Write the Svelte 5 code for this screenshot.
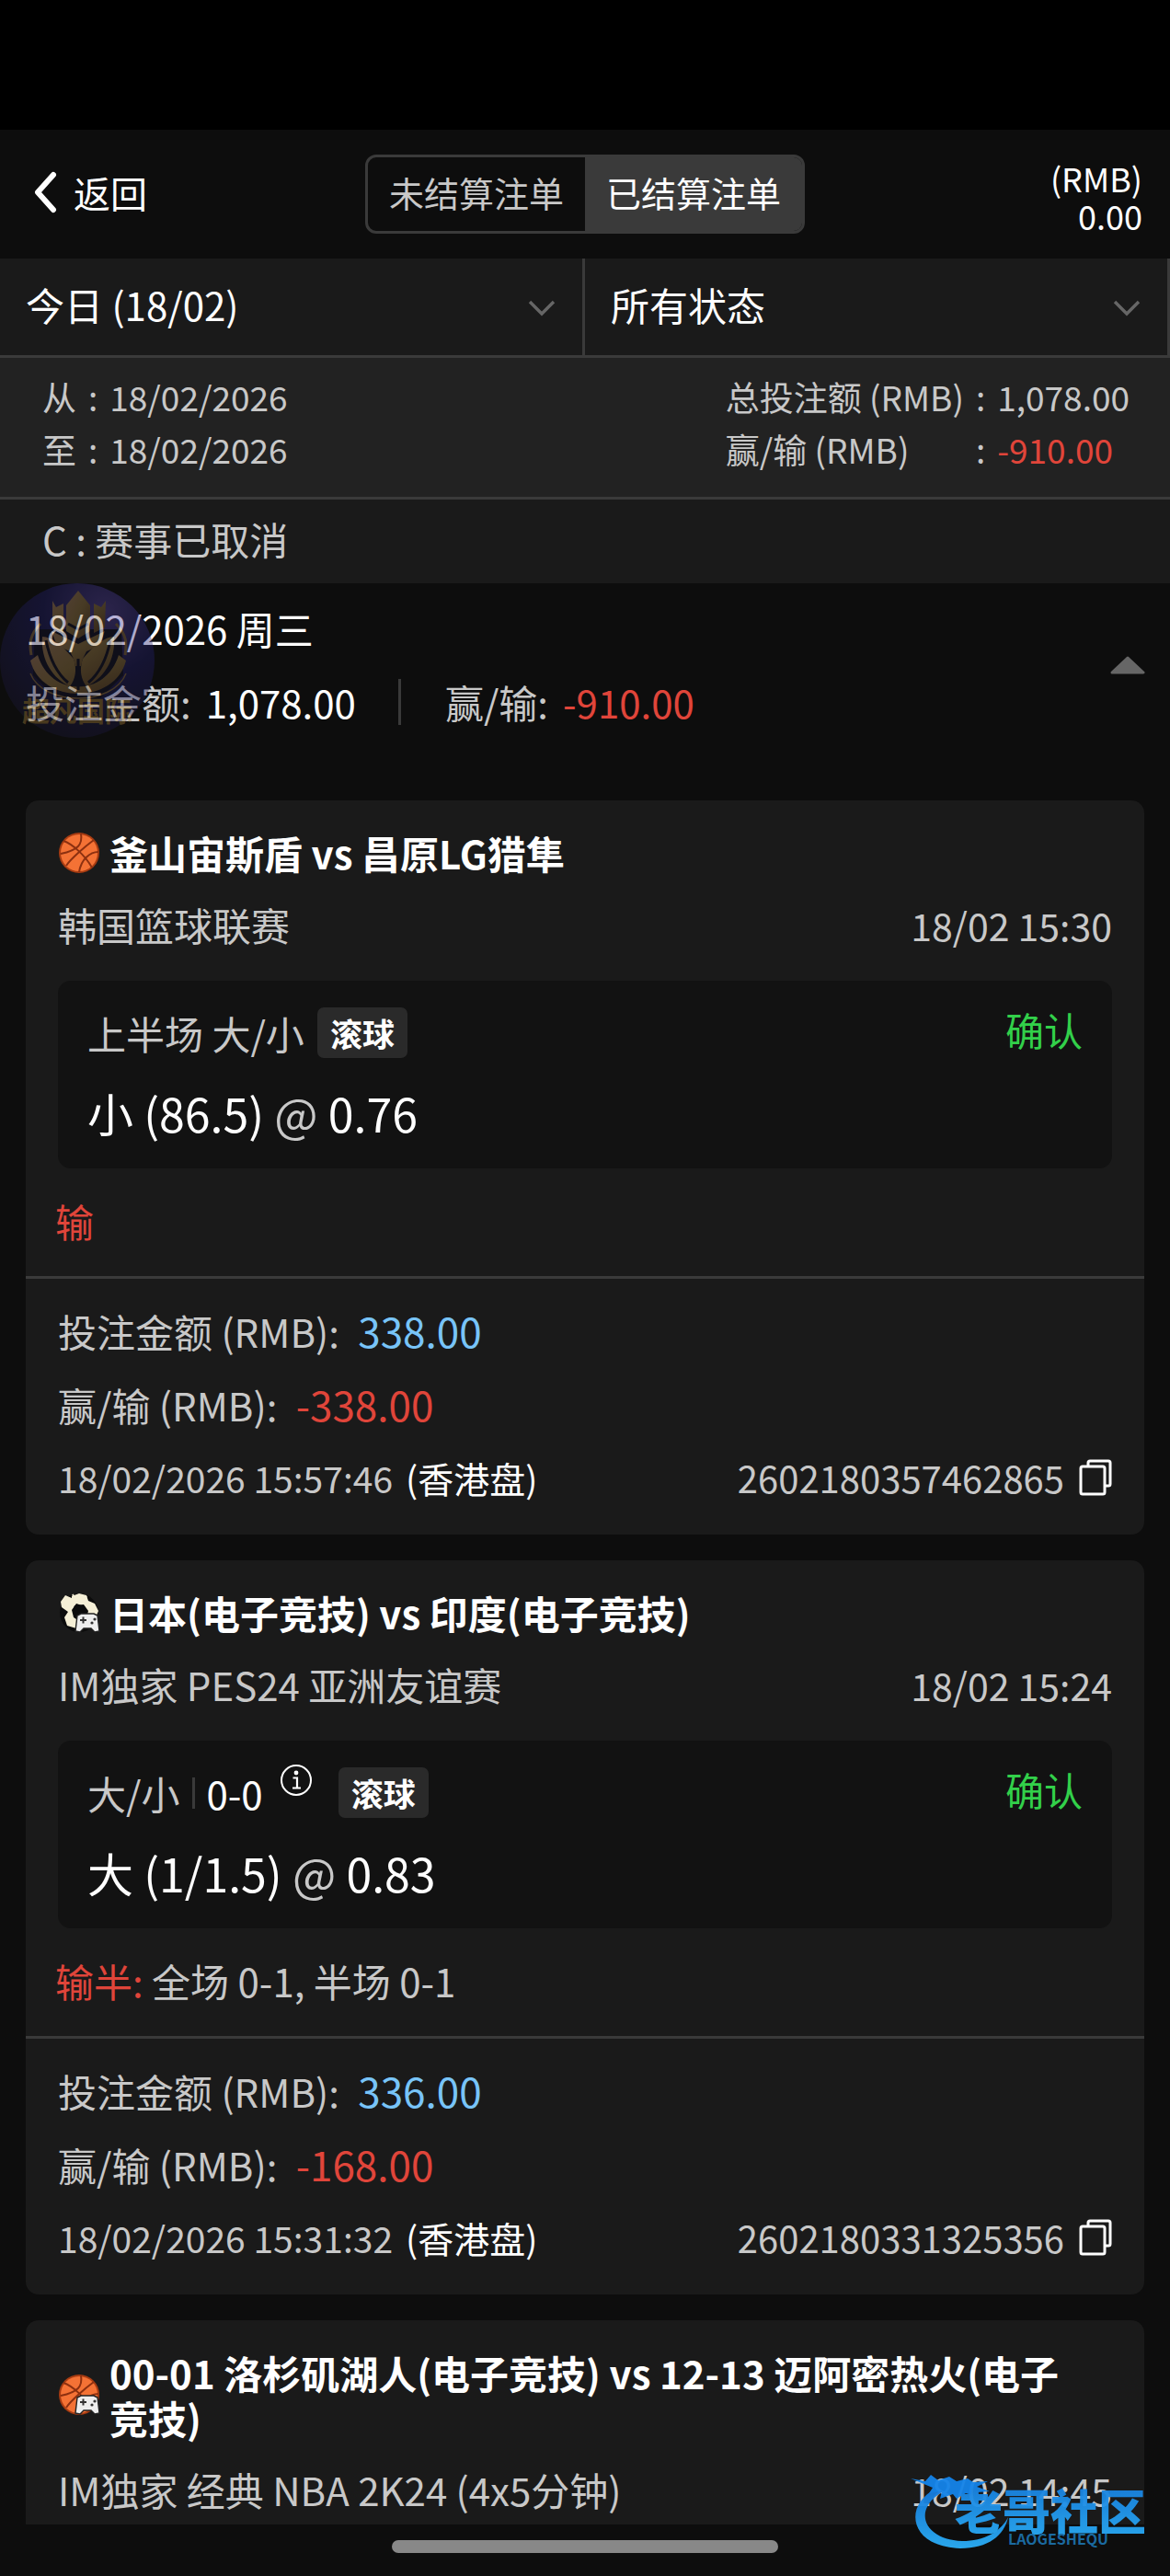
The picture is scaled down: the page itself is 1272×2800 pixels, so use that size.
<script>
  let tab = $state('settled');
  let open = $state(true);

  const tabs = [
    { id: 'unsettled', label: '未结算注单' },
    { id: 'settled', label: '已结算注单' }
  ];

  const bets = [
    {
      icon: 'basketball',
      title: '釜山宙斯盾 vs 昌原LG猎隼',
      league: '韩国篮球联赛',
      kickoff: '18/02 15:30',
      market: '上半场 大/小',
      pick: '小 (86.5)',
      odds: '0.76',
      result: '输',
      stake: '338.00',
      profit: '-338.00',
      placed: '18/02/2026 15:57:46',
      id: '2602180357462865'
    },
    {
      icon: 'esoccer',
      title: '日本(电子竞技) vs 印度(电子竞技)',
      league: 'IM独家 PES24 亚洲友谊赛',
      kickoff: '18/02 15:24',
      market: '大/小',
      score: '0-0',
      pick: '大 (1/1.5)',
      odds: '0.83',
      result: '输半:',
      detail: '全场 0-1, 半场 0-1',
      stake: '336.00',
      profit: '-168.00',
      placed: '18/02/2026 15:31:32',
      id: '2602180331325356'
    },
    {
      icon: 'ebasketball',
      title: '00-01 洛杉矶湖人(电子竞技) vs 12-13 迈阿密热火(电子竞技)',
      league: 'IM独家 经典 NBA 2K24 (4x5分钟)',
      kickoff: '18/02 14:45'
    }
  ];

  function copy(id) {
    navigator.clipboard?.writeText(id);
  }
</script>

{#snippet chevron()}
  <svg class="chevron" viewBox="0 0 30 18" aria-hidden="true">
    <path d="M2 2l13 13L28 2" fill="none" stroke="#666" stroke-width="3.4" />
  </svg>
{/snippet}

{#snippet sportIcon(name)}
  <svg class="sport" viewBox="0 0 46 46" aria-hidden="true">
    {#if name === 'esoccer'}
      <circle cx="23" cy="23" r="21" fill="#0c0c0c" />
      <path d="M15 5l8-3 8 2 2 6 7 3 4 8-3 7-10-3-2-9-9-3-5 7 2 8 3 2v10l-10-3-3-9 4-6-7-5-1-6 5-7 7 3z" fill="#f5efd6" />
      <path d="M16 3l3 6 8 1 4-5" fill="none" stroke="#f5efd6" stroke-width="2" />
      <path d="M18 15l10-1 5 7-2 8H19l-3-7z" fill="#0c0c0c" />
    {:else}
      <circle cx="23" cy="23" r="22" fill="#a83c12" />
      <circle cx="23" cy="23" r="20" fill="#f47235" />
      <g fill="none" stroke="#8c3010" stroke-width="2">
        <path d="M6 10c9 3 23 15 31 29" />
        <path d="M25 2c2 12-3 18-22 22" />
        <path d="M39 9C31 15 14 29 9 37" />
        <path d="M44 22c-9 0-19 8-21 22" />
      </g>
    {/if}
    {#if name !== 'basketball'}
      <path d="M21 26l4-2h14l4 2 2 17-5 1-4-4h-8l-4 4-5-1z" fill="#eee" stroke="#222" stroke-width="1.4" />
      <path d="M24 31h7M27.500 27.500v7" stroke="#333" stroke-width="2" />
      <circle cx="37" cy="34" r="1.6" fill="#333" />
      <circle cx="40" cy="30" r="1.6" fill="#333" />
    {/if}
  </svg>
{/snippet}

<div class="page">
  <div class="status-bar"></div>

  <header>
    <button class="back">
      <svg viewBox="0 0 26 46" aria-hidden="true">
        <path d="M22 4L5 23l17 19" fill="none" stroke="#fff" stroke-width="6" stroke-linecap="round" stroke-linejoin="round" />
      </svg>
      返回
    </button>
    <div class="tabs">
      {#each tabs as t}
        <button class:active={tab === t.id} onclick={() => (tab = t.id)}>{t.label}</button>
      {/each}
    </div>
    <div class="balance">
      <div>(RMB)</div>
      <div>0.00</div>
    </div>
  </header>

  <div class="filters">
    <div class="filter">
      <select aria-label="日期">
        <option>今日 (18/02)</option>
      </select>
      {@render chevron()}
    </div>
    <div class="filter">
      <select aria-label="状态">
        <option>所有状态</option>
      </select>
      {@render chevron()}
    </div>
  </div>

  <div class="summary">
    <div class="range">
      <span>从</span><span>:</span><span>18/02/2026</span>
      <span>至</span><span>:</span><span>18/02/2026</span>
    </div>
    <div class="totals">
      <span>总投注额 (RMB)</span><span>:</span><span>1,078.00</span>
      <span>赢/输 (RMB)</span><span>:</span><span class="loss">-910.00</span>
    </div>
  </div>

  <div class="legend">C : 赛事已取消</div>

  <section class="day">
    <div class="day-info">
      <div class="day-date">18/02/2026 周三</div>
      <div class="day-totals">
        <span class="muted">投注金额:</span>
        <span class="value">1,078.00</span>
        <span class="bar"></span>
        <span class="muted">赢/输:</span>
        <span class="loss value">-910.00</span>
      </div>
    </div>
    <button class="toggle" aria-label="展开" aria-expanded={open} onclick={() => (open = !open)}>
      <svg viewBox="0 0 38 20" aria-hidden="true">
        <path d="M19 2L36 18H2z" fill="#666" stroke="#666" stroke-width="3" stroke-linejoin="round" />
      </svg>
    </button>

    <svg class="emblem" viewBox="0 0 168 168" aria-hidden="true">
      <defs>
        <radialGradient id="night" cx="0.68" cy="0.18" r="0.9">
          <stop offset="0" stop-color="#5a48a8" />
          <stop offset="0.45" stop-color="#221f6a" />
          <stop offset="1" stop-color="#1a1730" />
        </radialGradient>
        <linearGradient id="gold" x1="0" x2="1" y1="0" y2="1">
          <stop offset="0" stop-color="#b88c6c" />
          <stop offset="0.5" stop-color="#a08048" />
          <stop offset="1" stop-color="#6c4a2c" />
        </linearGradient>
      </defs>
      <circle cx="84" cy="84" r="84" fill="url(#night)" />
      <path d="M38 50h94l2 50-26 26H62l-26-26z" fill="#14122c" />
      <g fill="url(#gold)">
        <path d="M85 8l13 16v28l-13 8-13-8V24z" />
        <path d="M57 19l4 7 8-4v32l-12-6zM115 19l-5 7-8-4v32l12-6z" />
        <path d="M56 52l29 14 29-14-6 16-14 6-4 8-2 8h-6l-2-8-4-8-14-6z" />
        <path d="M46 58c10 0 22 10 34 24 4 12 2 22-4 30C58 104 44 84 46 58zM124 58c-10 0-22 10-34 24-4 12-2 22 4 30 18-8 32-28 30-54z" />
        <path d="M33 84l8-6c14 46 74 46 88 0l8 6c-12 48-92 48-104 0z" />
      </g>
      <g fill="none" stroke="#14122c" stroke-width="3">
        <path d="M50 62c4 20 12 36 24 46M120 62c-4 20-12 36-24 46" />
        <path d="M85 82v34M74 44l11 6 11-6" />
      </g>
      <g fill="none" stroke="#98764c" stroke-width="3">
        <path d="M44 44C32 56 32 66 34 78" />
        <path d="M126 44c12 12 12 22 10 34" />
        <path d="M33 98c14 36 90 36 104 0" stroke-width="1.5" />
      </g>
      <text x="84" y="150" text-anchor="middle">超凡国际</text>
    </svg>
  </section>

  <main>
    {#if open}
      {#each bets as bet}
        <article>
          <div class="match">
            <div class="title">
              {@render sportIcon(bet.icon)}
              <h2>{bet.title}</h2>
            </div>
            <div class="league">
              <span>{bet.league}</span>
              <time>{bet.kickoff}</time>
            </div>
            {#if bet.pick}
              <div class="selection">
                <div class="market">
                  <span>{bet.market}</span>
                  {#if bet.score}
                    <span class="score">{bet.score}</span>
                    <svg class="info" viewBox="0 0 36 36" aria-hidden="true">
                      <circle cx="18" cy="18" r="16" fill="none" stroke="#fff" stroke-width="2" />
                      <circle cx="18" cy="10" r="2.4" fill="#fff" />
                      <path d="M14.500 15.500H19V26M14 26.500h9" fill="none" stroke="#fff" stroke-width="2.200" />
                    </svg>
                  {/if}
                  <span class="tag">滚球</span>
                  <span class="status">确认</span>
                </div>
                <div class="pick">{bet.pick} <span class="muted">@</span> {bet.odds}</div>
              </div>
            {/if}
          </div>
          {#if bet.pick}
            <div class="result"><span class="loss">{bet.result}</span> {bet.detail ?? ''}</div>
            <div class="money">
              <div>投注金额 (RMB): <span class="stake">{bet.stake}</span></div>
              <div>赢/输 (RMB): <span class="profit">{bet.profit}</span></div>
              <div class="ticket">
                <span>{bet.placed}</span>
                <span class="odds-type">(香港盘)</span>
                <span class="bet-id">{bet.id}</span>
                <button aria-label="复制" onclick={() => copy(bet.id)}>
                  <svg viewBox="0 0 36 40" aria-hidden="true">
                    <path d="M10 7V4q0-2 2-2h20q2 0 2 2v23q0 2-2 2h-3" fill="none" stroke="#fff" stroke-width="3" />
                    <rect x="2" y="8" width="26" height="30" rx="2" fill="none" stroke="#fff" stroke-width="3" />
                  </svg>
                </button>
              </div>
            </div>
          {/if}
        </article>
      {/each}
    {/if}
  </main>

  <div class="home-bar"><span></span></div>

  <svg class="watermark" viewBox="0 0 264 90" aria-hidden="true">
    <defs>
      <linearGradient id="blue" x1="0" x2="0" y1="0" y2="1">
        <stop offset="0" stop-color="#1478dc" />
        <stop offset="1" stop-color="#2cb0f8" />
      </linearGradient>
    </defs>
    <path d="M30 18C-8 34-4 82 54 84c30 0 48-14 52-34-8 16-26 26-50 26C12 74 2 40 36 22z" fill="url(#blue)" />
    <path d="M0 8l16 3 6-7 8 6 12-4 8 5 12-3 6 4 16-1-12 6 14 5-14 1 4 6-16-5-10 6-4-5-14 5 2-8-14 2 4-6z" fill="#1484ea" />
    <text class="brand" x="48" y="64">老哥社区</text>
    <text class="latin" x="106" y="80">LAOGESHEQU</text>
  </svg>
</div>

<style>
  :global(body) {
    background: #0d0d0d;
  }

  .page {
    position: relative;
    display: flex;
    flex-direction: column;
    height: 100vh;
    overflow: hidden;
    background: #0d0d0d;
    color: #fff;
    font-family: "Noto Sans CJK SC", sans-serif;
    font-size: 42px;
    line-height: 58px;
  }

  button {
    padding: 0;
    border: 0;
    background: none;
    color: inherit;
    font: inherit;
    cursor: pointer;
  }

  svg {
    display: block;
    flex: none;
  }

  .muted {
    color: #c8c8c8;
  }

  .loss,
  .profit {
    color: #e0453a;
  }

  .status-bar {
    flex: none;
    height: 141px;
    background: #000;
  }

  header {
    display: grid;
    grid-template-columns: 1fr auto 1fr;
    align-items: center;
    flex: none;
    height: 140px;
    padding: 0 30px;
  }

  .back {
    display: flex;
    align-items: center;
    gap: 18px;
    padding: 0 6px 4px;
    font-size: 40px;
    justify-self: start;
  }

  .back svg {
    width: 26px;
    height: 46px;
  }

  .tabs {
    display: flex;
    border: 3px solid #3a3a3a;
    border-radius: 12px;
    overflow: hidden;
  }

  .tabs button {
    height: 80px;
    padding: 0 23px 4px;
    color: #c8c8c8;
    font-size: 38px;
  }

  .tabs .active {
    background: #3a3a3a;
    color: #fff;
  }

  .balance {
    padding-top: 5px;
    font-size: 36px;
    line-height: 41px;
    text-align: right;
  }

  .filters {
    display: grid;
    grid-template-columns: 1fr 1fr;
    flex: none;
    background: #1a1a1a;
  }

  .filter {
    position: relative;
    border-right: 3px solid #3a3a3a;
    border-bottom: 3px solid #3a3a3a;
  }

  .filter select {
    width: 100%;
    height: 105px;
    padding: 0 28px 6px;
    border: 0;
    background: none;
    color: #fff;
    font: inherit;
    appearance: none;
  }

  .chevron {
    position: absolute;
    right: 29px;
    top: 45px;
    width: 30px;
    height: 18px;
    pointer-events: none;
  }

  .summary {
    display: flex;
    justify-content: space-between;
    flex: none;
    padding: 14px 44px 23px 46px;
    border-bottom: 3px solid #3a3a3a;
    background: #222;
    color: #c8c8c8;
    font-size: 37px;
    line-height: 57px;
  }

  .range,
  .totals {
    display: grid;
    grid-template-columns: auto auto auto;
    column-gap: 13px;
  }

  .legend {
    flex: none;
    padding: 14px 46px 19px;
    background: #1a1a1a;
    color: #c8c8c8;
  }

  .day {
    position: relative;
    display: flex;
    justify-content: space-between;
    align-items: center;
    flex: none;
    padding: 20px 26px 78px 28px;
  }

  .day-date {
    margin-bottom: 22px;
  }

  .day-totals {
    display: flex;
    align-items: center;
  }

  .day-totals .value {
    margin-left: 16px;
  }

  .bar {
    width: 3px;
    height: 50px;
    margin: 0 48px 0 46px;
    background: #3a3a3a;
  }

  .toggle svg {
    width: 40px;
    height: 20px;
  }

  .emblem {
    position: absolute;
    left: 0;
    top: 0;
    width: 168px;
    height: 168px;
    opacity: 0.4;
    pointer-events: none;
  }

  .emblem text {
    fill: #a07c38;
    font-size: 30px;
    font-weight: 700;
  }

  main {
    flex: 1;
    min-height: 0;
    padding: 0 28px;
    overflow: hidden;
  }

  article {
    margin-bottom: 28px;
    border-radius: 14px;
    background: #1a1a1a;
    color: #c8c8c8;
  }

  .match {
    padding: 32px 35px 28px;
  }

  .title {
    display: flex;
    align-items: center;
    gap: 10px;
    padding-right: 32px;
    margin-bottom: 25px;
  }

  .sport {
    width: 46px;
    height: 46px;
  }

  h2 {
    margin: 0;
    color: #fff;
    font-size: 42px;
    font-weight: 700;
    line-height: 49px;
  }

  .league {
    display: flex;
    justify-content: space-between;
  }

  .league time {
    font-size: 41px;
  }

  .selection {
    margin-top: 32px;
    padding: 29px 32px 31px;
    border-radius: 14px;
    background: #121212;
  }

  .market {
    display: flex;
    align-items: center;
    height: 55px;
    margin-bottom: 29px;
  }

  .score {
    margin-left: 14px;
    padding-left: 12px;
    border-left: 3px solid #3a3a3a;
    color: #fff;
    line-height: 34px;
  }

  .info {
    align-self: flex-start;
    width: 36px;
    height: 36px;
    margin: -4px 14px 0 18px;
  }

  .tag {
    margin-left: 14px;
    padding: 0 14px;
    border-radius: 7px;
    background: #2a2a2a;
    color: #fff;
    font-size: 35px;
    font-weight: 700;
    line-height: 55px;
  }

  .status {
    margin-left: auto;
    padding-bottom: 8px;
    color: #32d04a;
  }

  .pick {
    color: #fff;
    font-size: 50px;
    line-height: 60px;
  }

  .result {
    padding: 0 32px 31px;
    border-bottom: 3px solid #3a3a3a;
  }

  .money {
    display: grid;
    gap: 19px;
    padding: 26px 35px 32px;
    line-height: 60px;
  }

  .stake,
  .profit {
    margin-left: 11px;
    font-size: 44px;
  }

  .stake {
    color: #78c4f8;
  }

  .ticket {
    display: flex;
    align-items: center;
    font-size: 39px;
  }

  .odds-type {
    margin-left: 14px;
    color: #fff;
  }

  .bet-id {
    margin-left: auto;
    font-size: 40px;
  }

  .ticket button {
    margin-left: 16px;
  }

  .ticket svg {
    width: 36px;
    height: 40px;
  }

  .home-bar {
    display: flex;
    justify-content: center;
    align-items: center;
    flex: none;
    height: 56px;
  }

  .home-bar span {
    width: 33%;
    height: 14px;
    margin-top: -8px;
    border-radius: 7px;
    background: #888;
  }

  .watermark {
    position: absolute;
    right: 18px;
    bottom: 24px;
    width: 264px;
    height: 90px;
    opacity: 0.95;
    pointer-events: none;
  }

  .brand {
    fill: url(#blue);
    font-size: 52px;
    font-weight: 900;
  }

  .latin {
    fill: #1c6fa8;
    font-size: 16px;
    font-weight: 700;
  }
</style>
